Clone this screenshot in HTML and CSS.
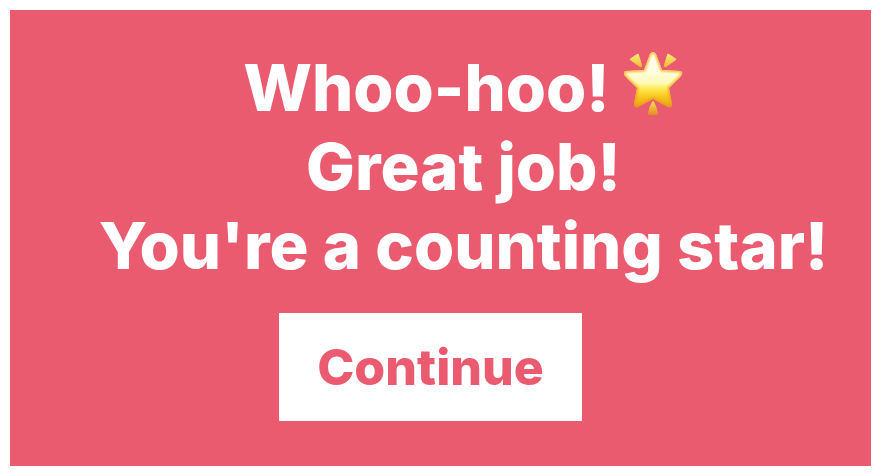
FILE: index.html
```html
<!DOCTYPE html>
<html lang="en">
<head>
<meta charset="utf-8">
<title>Counting star</title>
<link rel="stylesheet" href="styles.css">
</head>
<body>
<main class="card">
  <h1 class="message">
    <span class="line">Whoo-hoo! <svg class="star" viewBox="0 0 60 66" role="img" aria-label="Glowing star">
      <defs>
        <linearGradient id="body" x1="0" y1="0" x2="0" y2="1">
          <stop offset="0" stop-color="#fffdf0"/>
          <stop offset=".35" stop-color="#fffde2"/>
          <stop offset=".57" stop-color="#fdf9b4"/>
          <stop offset=".66" stop-color="#fdea55"/>
          <stop offset=".8" stop-color="#f8c822"/>
          <stop offset="1" stop-color="#ec9f18"/>
        </linearGradient>
        <linearGradient id="edge" x1="0" y1="0" x2="0" y2="1">
          <stop offset="0" stop-color="#f4bd2c"/>
          <stop offset=".5" stop-color="#f3c02c"/>
          <stop offset="1" stop-color="#e8981a"/>
        </linearGradient>
        <linearGradient id="ray" x1="0" y1="0" x2="0" y2="1">
          <stop offset="0" stop-color="#f9ea7c"/>
          <stop offset="1" stop-color="#f0bd30"/>
        </linearGradient>
        <linearGradient id="tail" x1="0" y1="0" x2="0" y2="1">
          <stop offset="0" stop-color="#fbe254"/>
          <stop offset="1" stop-color="#df8c20"/>
        </linearGradient>
        <filter id="soft" x="-10%" y="-10%" width="120%" height="120%">
          <feGaussianBlur stdDeviation="1"/>
        </filter>
        <path id="outline" d="M26 4Q29 0 32 4L38 20L56 21Q60 22 57 26L45 38L48 54Q48 58 44 57L29 49L14 57Q10 58 10 54L13 38L1 26Q-2 22 2 21L20 20Z"/>
        <clipPath id="clip"><use href="#outline"/></clipPath>
      </defs>
      <use href="#outline" fill="url(#body)"/>
      <g clip-path="url(#clip)">
        <use href="#outline" fill="none" stroke="url(#edge)" stroke-width="3" filter="url(#soft)"/>
      </g>
      <g fill="url(#ray)">
        <path d="M6 10Q5 9 7 8L13 4Q15 3 15 5L18 15Q18 18 16 17Z"/>
        <path d="M52 10Q53 9 51 8L45 4Q43 3 43 5L40 15Q40 18 42 17Z"/>
      </g>
      <path fill="url(#tail)" d="M28 52Q29 50 30 52Q33 57 34 63Q34 65 33 65H25Q24 65 24 63Q25 57 28 52Z"/>
    </svg></span>
    <span class="line">Great job!</span>
    <span class="line">You're a counting star!</span>
  </h1>
  <button class="continue" type="button">Continue</button>
</main>
</body>
</html>
```
FILE: styles.css
```css
* { box-sizing: border-box; }
body {
  margin: 0;
  padding: 10px;
  min-height: 100vh;
  display: flex;
  background: #fff;
  font-family: Inter, "Liberation Sans", sans-serif;
}
.card {
  flex: 1;
  display: flex;
  flex-direction: column;
  align-items: center;
  padding: 38px 20px 38px 0;
  background: #ea5b70;
}
.message {
  margin: 0 0 28px 66px;
  color: #fff;
  font-size: 65px;
  line-height: 79px;
  font-weight: 800;
  text-align: center;
  white-space: nowrap;
}
.line { display: block; }
.star {
  width: 60px;
  height: 66px;
  vertical-align: -5px;
}
.continue {
  padding: 24px 38px;
  border: 0;
  background: #fff;
  color: #ea5b70;
  font: 800 50px/60px Inter, "Liberation Sans", sans-serif;
  cursor: pointer;
}
```
